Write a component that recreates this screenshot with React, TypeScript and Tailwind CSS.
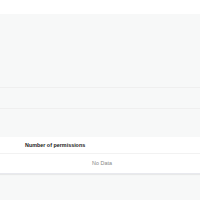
export default function App() {
  return (
    <div className="w-[200px] h-[200px] bg-[#f7f8f8] flex flex-col font-['Liberation_Sans',Arial,sans-serif]">
      <div className="h-[14px] bg-white shrink-0" />
      <div className="h-[74px] border-b border-[#efefef] shrink-0" />
      <div className="h-[21px] border-b border-[#efefef] shrink-0" />
      <div className="h-[28px] shrink-0" />
      <div className="bg-white shadow-[0_1px_1px_rgba(0,0,0,0.06)] border-b border-[#e8e9ee]">
        <div className="h-[17px] flex items-center pl-[25px] pt-[1px] border-b border-[#f2f2f2]">
          <span className="text-[5.4px] font-bold text-[#222]">Number of permissions</span>
        </div>
        <div className="h-[19px] flex items-center justify-center pl-[4px]">
          <span className="text-[5.4px] text-[#888]">No Data</span>
        </div>
      </div>
    </div>
  );
}
